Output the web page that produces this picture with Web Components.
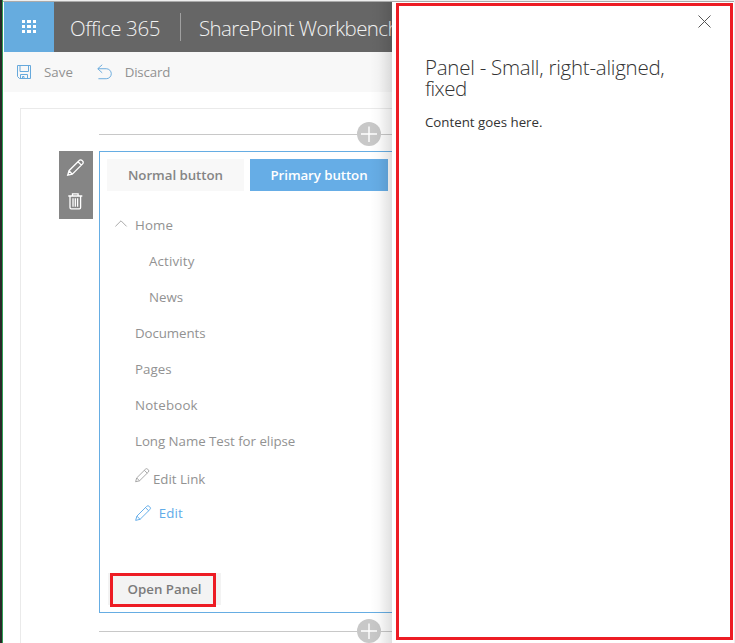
<!DOCTYPE html>
<html lang="en">
<head>
<meta charset="utf-8">
<title>SharePoint Workbench</title>
<style>
html,body{margin:0;height:100%;overflow:hidden;background:#fff}
body{font-family:"Open Sans","Noto Sans",sans-serif;font-size:13.3px;color:#929292}
</style>
</head>
<body>
<workbench-page></workbench-page>
<script>
const define = (name, html, ready) => {
  const t = document.createElement('template');
  t.innerHTML = html;
  customElements.define(name, class extends HTMLElement {
    constructor(){ super(); this.attachShadow({mode:'open'}).append(t.content.cloneNode(true)); }
    connectedCallback(){ if (ready) ready(this); }
  });
};

/* A one-line label whose tracking is adjusted to span the given width. */
define('fit-label', `<style>:host{display:inline-block;white-space:nowrap;flex:none}span{display:inline-block}</style><span><slot></slot></span>`, el => {
  const s = el.shadowRoot.querySelector('span');
  const w = +el.getAttribute('w');
  const n = el.textContent.length;
  s.style.letterSpacing = ((w - s.getBoundingClientRect().width) / n) + 'px';
});

const icons = {
  waffle: [14,13,`<g fill="#fff" stroke="none"><path d="M0 0h3v3H0zM5 0h4v3H5zM11 0h3v3h-3zM0 5h3v3H0zM5 5h4v3H5zM11 5h3v3h-3zM0 10h3v3H0zM5 10h4v3H5zM11 10h3v3h-3z"/></g>`],
  save: [15,15,`<path d="M.5.5h13v13h-11l-2-2zM3 .5v6h8.500v-6M3.500 13.500v-4h7v4M5.500 13.500v-2h1.500v2"/>`],
  undo: [16,17,`<path d="M5.500.8.8 5l4.700 4.300M1 5h8.800a5 5 0 0 1 0 10.500H1.500"/>`],
  pencil: [17,17,`<path d="M.7 16.200 2 11.700 12.200 1.500a2 2 0 0 1 2.900 0l.5.500a2 2 0 0 1 0 2.900L5.300 15.100zM2 11.700l3.300 3.400M11 2.700l3.400 3.400"/>`],
  trash: [15,17,`<path d="M.3 3h14M4.500 3V.8h5.600V3M2 3v11.600q0 1.200 1.200 1.200h8.200q1.200 0 1.200-1.200V3M5 5.200v8.500M7.300 5.200v8.500M9.600 5.200v8.500"/>`],
  chevron: [12,7,`<path d="M.4 6.400 6 .8l5.600 5.600"/>`],
  close: [13,13,`<path d="M.5.5l12 12M12.500.5l-12 12"/>`],
  plus: [24,24,`<circle cx="12" cy="12" r="12" fill="#c8c8c8" stroke="none"/><path d="M4 12h16M12 4.500v15.500" stroke="#fff" stroke-width="1.400"/>`]
};
define('ui-icon', `<style>:host{display:block;flex:none}svg{display:block;overflow:visible}</style><div></div>`, el => {
  const [w,h,p] = icons[el.getAttribute('name')];
  const k = +(el.getAttribute('scale') || 1);
  el.shadowRoot.querySelector('div').innerHTML = `<svg width="${w*k}" height="${h*k}" viewBox="0 0 ${w} ${h}" fill="none" stroke="currentColor" stroke-width="${el.getAttribute('stroke')||1}">${p}</svg>`;
});

define('suite-bar', `<style>
:host{display:flex;height:50px;background:#666;color:#f2f2f2;align-items:center;font-size:20.500px;font-weight:300}
.w{width:50px;flex:none;height:50px;background:#66acdf;display:flex;align-items:center;justify-content:center}
.w ui-icon{margin-bottom:1px}
.o{margin-left:16px;width:110px;padding-top:1px}
.s{width:1px;flex:none;height:28px;background:#a0a0a0;margin-right:18px}
.t{padding-top:1px}
</style><div class="w"><ui-icon name="waffle"></ui-icon></div><fit-label class="o" w="90">Office 365</fit-label><div class="s"></div><fit-label class="t" w="200">SharePoint Workbench</fit-label>`);

define('command-bar', `<style>
:host{display:flex;height:40px;background:#f8f8f8;align-items:center;padding-left:13px}
ui-icon{color:#66a9dc}
.u{margin-left:24px;margin-right:12.500px}.a{margin-right:12px}
</style><ui-icon class="a" name="save"></ui-icon><fit-label w="29">Save</fit-label><ui-icon class="u" name="undo" scale=".95"></ui-icon><fit-label w="45.500">Discard</fit-label>`);

define('zone-divider', `<style>
:host{display:flex;align-items:center;height:24px}
.a{width:258px;height:1px;background:#c8c8c8}.b{flex:1;height:1px;background:#c8c8c8}
</style><div class="a"></div><ui-icon name="plus"></ui-icon><div class="b"></div>`);

define('part-tools', `<style>
:host{display:flex;flex-direction:column;align-items:center;width:34px;height:68px;background:#858585;color:#fff;box-sizing:border-box;padding:8px 1px 0 0;gap:17px}
</style><ui-icon name="pencil" stroke="1.300"></ui-icon><ui-icon name="trash" stroke="1.300"></ui-icon>`);

define('push-button', `<style>
:host{display:flex;align-items:center;justify-content:center;height:32px;background:#f8f8f8;color:#858585;font-weight:600;flex:none;box-sizing:border-box}
:host([primary]){background:#66ade6;color:#fff}
</style><slot></slot>`);

define('nav-row', `<style>
:host{display:flex;align-items:center;height:36px;padding-left:35px}
:host([child]){padding-left:49px}
</style><slot></slot>`);

define('web-part', `<style>
:host{display:block;border:1px solid #66ade3;border-right:0;height:462px;box-sizing:border-box;padding-top:7px}
.b{display:flex;gap:6px;padding-left:7px}
.n{width:137px}.p{width:138px}
nav{padding-top:16px}
.home{padding-left:15px}.chev{margin-right:8px;margin-bottom:3px;color:#aaa}
.l{height:38px}.l ui-icon{margin:-6px 3.500px 0 0;color:#999}.l fit-label{padding-top:2px}
.e{height:32px;color:#61ace9}.e ui-icon{margin-right:7.500px}
.open{margin:44px 0 0 8px;width:113px;background:#f3f3f3;color:#7b7b7b;position:relative}
.ring{position:absolute;left:2px;top:0;width:106px;height:34px;box-sizing:border-box;border:3px solid #ed1c24}
</style>
<div class="b"><push-button class="n"><fit-label w="95">Normal button</fit-label></push-button><push-button primary class="p"><fit-label w="97">Primary button</fit-label></push-button></div>
<nav>
<nav-row class="home"><ui-icon class="chev" name="chevron"></ui-icon><fit-label w="38">Home</fit-label></nav-row>
<nav-row child><fit-label w="45.500">Activity</fit-label></nav-row>
<nav-row child><fit-label w="34">News</fit-label></nav-row>
<nav-row><fit-label w="70.500">Documents</fit-label></nav-row>
<nav-row><fit-label w="36.500">Pages</fit-label></nav-row>
<nav-row><fit-label w="62.800">Notebook</fit-label></nav-row>
<nav-row><fit-label w="160.300">Long Name Test for elipse</fit-label></nav-row>
<nav-row class="l"><ui-icon name="pencil" scale=".85"></ui-icon><fit-label w="52.300">Edit Link</fit-label></nav-row>
<nav-row class="e"><ui-icon name="pencil" scale=".95"></ui-icon><fit-label w="24.300">Edit</fit-label></nav-row>
</nav>
<push-button class="open"><fit-label w="74">Open Panel</fit-label><div class="ring"></div></push-button>`);

define('page-canvas', `<style>
:host{display:block;margin:16px 0 0 16px;border:1px solid #eaeaea;border-right:0;border-bottom:0;padding:13px 0 0 38px;height:560px}
zone-divider{margin-left:40px}
.r{display:grid;grid-template-columns:34px 1fr;column-gap:6px;align-items:start;margin:5px 0 6px}
</style><zone-divider></zone-divider><div class="r"><part-tools></part-tools><web-part></web-part></div><zone-divider></zone-divider>`);

define('side-panel', `<style>
:host{display:block;border:3px solid #ed1c24;box-sizing:border-box;width:337px;height:637px;margin:3px 0 0 4px;padding:9px 19px 0 26px;color:#333;background:#fff}
.x{display:flex;justify-content:flex-end;color:#555}
h1{font-size:20.500px;line-height:21px;font-weight:300;margin:29px 0 0;color:#333;display:flex;flex-direction:column;align-items:flex-start}
.c{margin-top:13px;line-height:20px}
</style><div class="x"><ui-icon name="close"></ui-icon></div>
<h1><fit-label w="239.500">Panel - Small, right-aligned,</fit-label><fit-label w="41.500">fixed</fit-label></h1>
<div class="c"><fit-label w="117.500">Content goes here.</fit-label></div>`);

define('workbench-page', `<style>
:host{display:grid;grid-template-columns:2px 1px 389px 1fr;height:643px;width:735px;overflow:hidden;background:#fff}
.d{background:#292929}.g{background:#2f9e56}
main{overflow:hidden;border-top:1px solid #eee;position:relative;box-sizing:border-box;padding-left:1px}
.line{height:1px;background:#aaa;margin-left:-1px}
.shade{position:absolute;right:0;top:1px;bottom:0;width:22px;background:linear-gradient(to right,transparent,rgba(0,0,0,.025) 40%,rgba(0,0,0,.12))}
aside{background:linear-gradient(#eee 0 1px,#aaa 1px 2px,transparent 2px);box-shadow:inset -1px 0 #eee}
</style><div class="d"></div><div class="g"></div>
<main><div class="line"></div><suite-bar></suite-bar><command-bar></command-bar><page-canvas></page-canvas><div class="shade"></div></main>
<aside><side-panel></side-panel></aside>`);
</script>
</body>
</html>
